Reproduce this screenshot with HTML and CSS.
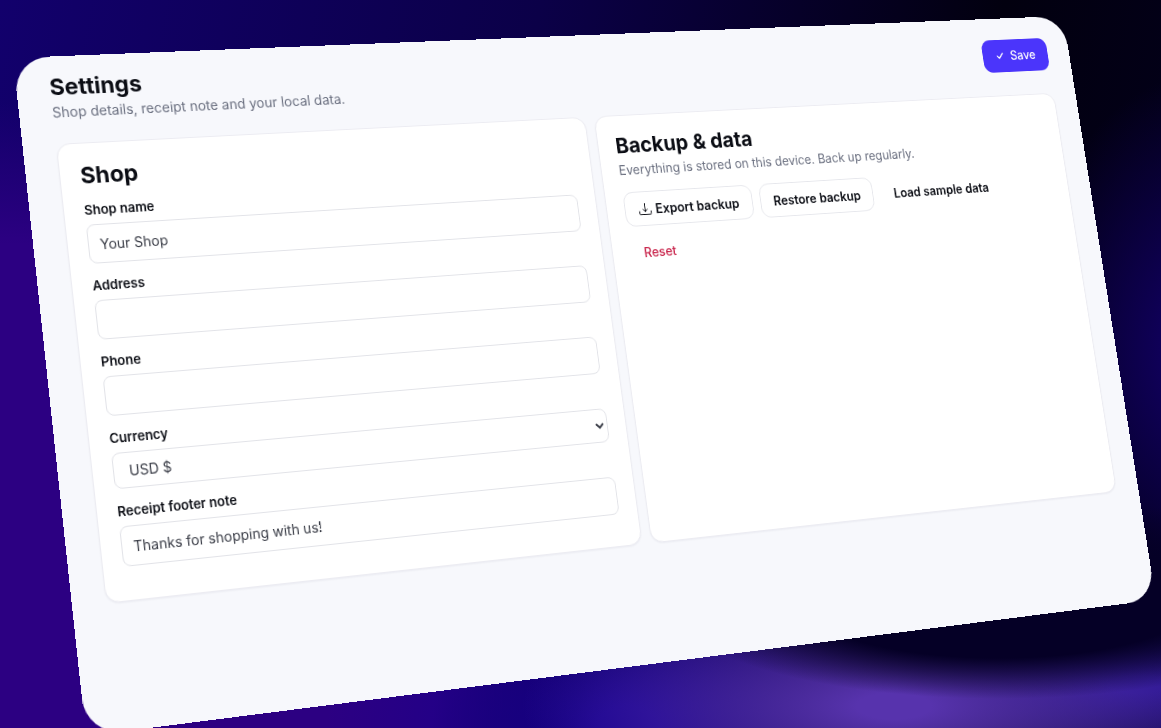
FILE: index.html
```html
<!DOCTYPE html>
<html lang="en">
<head>
  <meta charset="UTF-8">
  <meta name="viewport" content="width=device-width, initial-scale=1">
  <title>Settings</title>
  <link rel="stylesheet" href="styles.css">
</head>
<body>

  <main class="panel">
    <header class="page-header">
      <div>
        <h1>Settings</h1>
        <p class="subtitle">Shop details, receipt note and your local data.</p>
      </div>
      <button type="submit" form="shopForm" class="btn btn-primary">
        <svg width="14" height="14" viewBox="0 0 14 14" fill="none" stroke="currentColor" stroke-width="1.5" stroke-linecap="round" stroke-linejoin="round" aria-hidden="true">
          <path d="M2.5 7 5 9.4 9.6 4" />
        </svg>
        Save
      </button>
    </header>

    <div class="cards">
      <section class="card">
        <h2>Shop</h2>
        <form id="shopForm">
          <div class="form-group">
            <label for="shopName">Shop name</label>
            <input id="shopName" type="text" value="Your Shop" />
          </div>

          <div class="form-group">
            <label for="address">Address</label>
            <input id="address" type="text" />
          </div>

          <div class="form-group">
            <label for="phone">Phone</label>
            <input id="phone" type="tel" />
          </div>

          <div class="form-group">
            <label for="currency">Currency</label>
            <select id="currency">
              <option value="USD">USD $</option>
            </select>
          </div>

          <div class="form-group">
            <label for="footerNote">Receipt footer note</label>
            <input id="footerNote" type="text" value="Thanks for shopping with us!" />
          </div>
        </form>
      </section>

      <section class="card">
        <h2>Backup &amp; data</h2>
        <p class="hint">Everything is stored on this device. Back up regularly.</p>
        <div class="actions">
          <button type="button" class="btn btn-outline">
            <svg width="15" height="15" viewBox="0 0 15 15" fill="none" stroke="currentColor" stroke-width="1" stroke-linecap="round" stroke-linejoin="round" aria-hidden="true">
              <path d="M7.5 1.5v8.7M5 7.8l2.5 2.5L10 7.8M.8 10v2.4q0 1.1 1.1 1.1h11.2q1.1 0 1.1-1.1V10" />
            </svg>
            Export backup
          </button>
          <button type="button" class="btn btn-outline">Restore backup</button>
          <button type="button" class="btn">Load sample data</button>
          <button type="button" class="btn btn-danger">Reset</button>
        </div>
      </section>
    </div>
  </main>

</body>
</html>
```

FILE: styles.css
```css
* {
  box-sizing: border-box;
}

body {
  margin: 0;
  height: 100vh;
  overflow: hidden;
  font-family: Inter, "Liberation Sans", sans-serif;
  font-size: 14px;
  color: #0b0d14;
  background-color: #08003a;
  background-image:
    radial-gradient(ellipse 29% 14% at 86% 82%, #050026 60%, transparent 100%),
    radial-gradient(ellipse 32% 18% at 77% 97%, #5733ad 10%, transparent 100%),
    radial-gradient(ellipse 24% 12% at 98% 94%, #26128e 10%, transparent 100%),
    radial-gradient(ellipse 26% 30% at 54% 100%, #17008e 10%, transparent 100%),
    radial-gradient(ellipse 16% 38% at 104% 48%, #10005c 20%, transparent 100%),
    radial-gradient(ellipse 50% 78% at 0% 92%, #2c0082 75%, transparent 100%),
    linear-gradient(100deg, #12006c 0%, #0b0048 42%, #02000f 78%, #03001c 100%);
}

/* tilted in space, right edge further away */
.panel {
  width: calc(100vw + 39px);
  min-height: calc(100vh - 51px);
  padding: 19px 28px 20px 33px;
  border-radius: 36px;
  background-color: #f7f8fc;
  transform-origin: 0 0;
  transform: matrix3d(
    1.01154, -0.03294, 0, 0.00012839,
    0.10376, 0.96681, 0, -0.00004721,
    0, 0, 1, 0,
    13, 58, 0, 1
  );
}

h1, h2, p {
  margin: 0;
}

h1, h2 {
  font-size: 23px;
  line-height: 26px;
}

.page-header {
  display: flex;
  align-items: center;
  justify-content: space-between;
  margin-bottom: 22px;
}

.subtitle, .hint {
  line-height: 20px;
  color: #6b7080;
}

.subtitle {
  margin-top: 3px;
}

.hint {
  margin: 4px 0 14px;
}

.cards {
  display: grid;
  grid-template-columns: 1fr 1fr;
  gap: 10px;
}

.card {
  padding: 20px 20px 33px;
  border: 1px solid #ececf2;
  border-radius: 14px;
  background-color: white;
  box-shadow: 0 1px 2px rgba(20, 20, 60, 0.05);
}

.card form {
  display: grid;
  gap: 13px;
  margin-top: 13px;
}

.form-group {
  display: grid;
  gap: 6px;
}

label {
  font-size: 13px;
  font-weight: 600;
  line-height: 18px;
}

input, select {
  width: 100%;
  height: 40px;
  padding: 0 11px;
  border: 1px solid #e2e3e8;
  border-radius: 8px;
  background-color: white;
  font-family: inherit;
  font-size: 14px;
  color: #3a3d47;
}

select {
  height: 36px;
}

.actions {
  display: flex;
  flex-wrap: wrap;
  gap: 9px;
}

.btn {
  display: inline-flex;
  align-items: center;
  justify-content: center;
  gap: 5px;
  height: 38px;
  padding: 0 15px;
  border: 1px solid transparent;
  border-radius: 11px;
  background: none;
  font-family: inherit;
  font-size: 14px;
  font-weight: 600;
  color: #0b0d14;
  cursor: pointer;
}

.btn-primary {
  background-color: #4b35fb;
  font-weight: 500;
  color: white;
}

.btn-outline {
  border-color: #e6e7ec;
  background-color: white;
}

.btn-danger {
  font-weight: 500;
  color: #c8234a;
}
```
